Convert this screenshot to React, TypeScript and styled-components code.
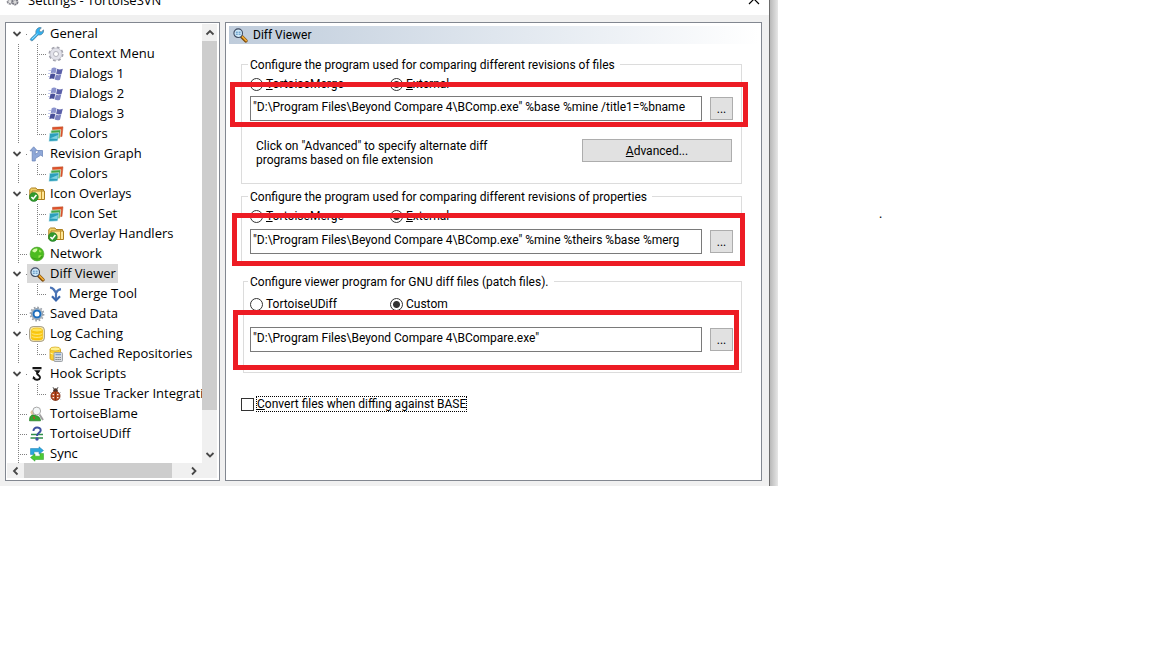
import React from "react";
import styled, { createGlobalStyle, css } from "styled-components";

const TREE_FONT = '"Open Sans", "Noto Sans", sans-serif';
const FORM_FONT = 'Roboto, "Noto Sans", sans-serif';

const GlobalStyle = createGlobalStyle`
  *, *::before, *::after { box-sizing: border-box; }
  body { margin: 0; background: #fff; color: #000; font: 12px/16px ${TREE_FONT}; }
  button, input { font: inherit; color: inherit; }
`;

/* ---------- page and window ---------- */

const Page = styled.main`
  display: grid;
  grid-template-columns: minmax(0, 1fr) 374px;
  align-items: start;
`;

const Margin = styled.aside`
  padding: 206px 0 0 101px;
`;

const WindowFrame = styled.section`
  display: flex;
`;

const WindowBody = styled.div`
  flex: 1;
  min-width: 0;
  border-right: 1px solid #6d6d6d;
  background: #f0f0f0;
`;

const DropShadow = styled.div`
  width: 8px;
  background: linear-gradient(to right, #b9b9b9, #e6e6e6);
`;

const TitleBar = styled.header`
  display: flex;
  align-items: flex-end;
  gap: 6px;
  height: 15px;
  padding: 0 9px 7px 6px;
  overflow: hidden;
  background: #fff;
`;

const WindowTitle = styled.h1`
  flex: 1;
  margin: 0;
  font-size: 13px;
  line-height: 16px;
  font-weight: 400;
`;

const CloseButton = styled.button`
  display: flex;
  padding: 0;
  border: 0;
  background: none;
`;

const Columns = styled.div`
  display: flex;
  gap: 5px;
  padding: 7px 7px 5px 5px;
`;

/* ---------- navigation tree ---------- */

const TreePanel = styled.nav`
  display: grid;
  grid-template-columns: minmax(0, 1fr) 15px;
  grid-template-rows: auto 15px;
  flex: 0 0 215px;
  padding: 1px 2px 2px 1px;
  border: 1px solid #828790;
  background: #fff;
`;

const TreeView = styled.div`
  overflow: hidden;
`;

const TreeList = styled.ul`
  margin: 0 0 -1px;
  padding: 0 0 0 2px;
  list-style: none;
`;

const TreeRow = styled.li`
  display: flex;
  height: 20px;
`;

const dotsDown = "repeating-linear-gradient(to bottom, #808080 0 1px, transparent 1px 2px)";
const dotsAcross = "repeating-linear-gradient(to right, #808080 0 1px, transparent 1px 2px)";

const Guide = styled.span<{ $kind: "line" | "tee" | "corner"; $wide?: boolean }>`
  flex: 0 0 ${(p) => (p.$wide ? 19 : 18)}px;
  background-repeat: no-repeat;
  ${(p) =>
    p.$kind === "line" &&
    css`
      background-image: ${dotsDown};
      background-position: 9px 0;
      background-size: 1px 20px;
    `}
  ${(p) =>
    (p.$kind === "tee" || p.$kind === "corner") &&
    css`
      background-image: ${dotsDown}, ${dotsAcross};
      background-position: 9px 0, 9px 10px;
      background-size: 1px ${p.$kind === "tee" ? 20 : 11}px, 9px 1px;
    `}
`;

const Expander = styled.button`
  display: flex;
  flex: 0 0 18px;
  align-items: center;
  padding: 0 0 0 3px;
  border: 0;
  background: ${dotsAcross} 17px 10px / 1px 1px no-repeat;
`;

const Node = styled.button<{ $selected?: boolean }>`
  display: flex;
  align-items: center;
  gap: 5px;
  height: 19px;
  padding: 0 2px;
  border: 0;
  background: ${(p) => (p.$selected ? "#d9d9d9" : "none")};
  font-family: ${TREE_FONT};
  font-size: 13px;
  line-height: 18px;
  white-space: nowrap;
`;

const NodeLabel = styled.span`
  padding-bottom: 1px;
`;

const ScrollBar = styled.div<{ $vertical?: boolean }>`
  display: flex;
  flex-direction: ${(p) => (p.$vertical ? "column" : "row")};
  background: #f0f0f0;
`;

const ScrollArrow = styled.button`
  display: flex;
  flex: 0 0 17px;
  align-items: center;
  justify-content: center;
  padding: 0;
  border: 0;
  background: none;
`;

const Thumb = styled.span<{ $share: number }>`
  flex: ${(p) => p.$share} 1 0;
  background: #cdcdcd;
`;

const Track = styled.span<{ $share: number }>`
  flex: ${(p) => p.$share} 1 0;
`;

const Corner = styled.span`
  background: #f0f0f0;
`;

/* ---------- settings page ---------- */

const SettingsPanel = styled.section`
  flex: 1;
  min-width: 0;
  border: 1px solid #828790;
  background: #fff;
  font-family: ${FORM_FONT};
  font-size: 12px;
`;

const PanelHeader = styled.h2`
  display: flex;
  align-items: center;
  gap: 5px;
  height: 18px;
  margin: 3px 2px 12px 3px;
  padding-left: 3px;
  background: linear-gradient(to right, #bfccdb, #dfe6ee 50%, #fff);
  font-size: 12px;
  font-weight: 400;
`;

const Form = styled.form`
  padding: 0 19px 0 15px;
`;

const Group = styled.fieldset<{ $indent?: boolean; $gap: number; $bottom: number; $after: number }>`
  display: block;
  min-width: 0;
  margin: 0 0 ${(p) => p.$after}px ${(p) => (p.$indent ? 2 : 0)}px;
  padding: ${(p) => p.$gap}px 8px ${(p) => p.$bottom}px ${(p) => (p.$indent ? 6 : 8)}px;
  border: 1px solid #dcdcdc;
`;

const Legend = styled.legend`
  margin-left: -2px;
  padding: 2px 5px 0 2px;
  line-height: 14px;
`;

const Choices = styled.div<{ $gap: number }>`
  display: grid;
  grid-template-columns: 140px auto;
  margin-bottom: ${(p) => p.$gap}px;
`;

const Choice = styled.label`
  display: flex;
  align-items: center;
  gap: 3px;
  height: 16px;
`;

const Radio = styled.input`
  appearance: none;
  width: 13px;
  height: 13px;
  margin: 0;
  border: 1px solid #333;
  border-radius: 50%;
  background: #fff;
  &:checked {
    background: radial-gradient(circle, #333 0 3px, #fff 4px);
  }
`;

const Entry = styled.div`
  position: relative;
  display: flex;
  align-items: center;
  gap: 8px;
`;

const PathInput = styled.input`
  flex: 1;
  min-width: 0;
  height: 25px;
  padding: 0 2px 4px;
  border: 1px solid #7a7a7a;
  background: #fff;
  outline: 0;
`;

const PushButton = styled.button<{ $width: number }>`
  flex: none;
  width: ${(p) => p.$width}px;
  height: 23px;
  padding: 0;
  border: 1px solid #adadad;
  background: #e1e1e1;
`;

const Highlight = styled.span<{ $inset: string }>`
  position: absolute;
  inset: ${(p) => p.$inset};
  border: 5px solid #ed1c24;
  pointer-events: none;
`;

const AdvancedRow = styled.div`
  display: flex;
  align-items: flex-start;
  justify-content: space-between;
  margin-top: 18px;
  padding: 0 1px 0 6px;
`;

const Hint = styled.p`
  width: 260px;
  margin: 0;
  line-height: 14px;
`;

const CheckLine = styled.label`
  display: inline-flex;
  align-items: center;
  gap: 2px;
`;

const CheckBox = styled.input`
  appearance: none;
  width: 13px;
  height: 13px;
  margin: 0;
  border: 1px solid #333;
  background: #fff;
`;

const FocusText = styled.span`
  border: 1px dotted #000;
  line-height: 14px;
`;

/* ---------- icons ---------- */

const Svg = styled.svg`
  display: block;
  flex: none;
`;

const Icon = ({ children }: { children: React.ReactNode }) => (
  <Svg width="16" height="16" viewBox="0 0 16 16" aria-hidden="true">
    {children}
  </Svg>
);

const WrenchIcon = () => (
  <Icon>
    <path d="M1.500 12.800 7 7.500C6.300 4.600 8 1.700 11 1.500l1.300.3-2 2.300.4 1.500 1.600.3 2.200-2c.5 3.200-2 5.600-5.300 5L3.800 14.500c-1.400.8-3.100-.4-2.300-1.700z" fill="#2eb2f2" stroke="#55839f" strokeWidth=".8" />
    <path d="M3 13 8.500 7.800" stroke="#9de0ff" strokeWidth="1" />
  </Icon>
);

const GearIcon = () => (
  <Icon>
    <circle cx="8" cy="8" r="6.500" fill="none" stroke="#a2a2ac" strokeWidth="2" strokeDasharray="2.700 2.405" />
    <circle cx="8" cy="8" r="4.300" fill="none" stroke="#e2e2ea" strokeWidth="3.600" />
    <circle cx="8" cy="8" r="6" fill="none" stroke="#b4b4be" strokeWidth=".6" />
    <circle cx="8" cy="8" r="2.500" fill="#fff" stroke="#a0a0ab" strokeWidth=".8" />
  </Icon>
);

const FlagIcon = () => (
  <Icon>
    <path d="M3.700 2.200C5.500 1.100 7.200 1.400 8.600 2.400L7.500 7.400C6 6.600 4.300 6.600 2.600 7.400z" fill="#8b93cd" />
    <path d="M9.200 2.800C10.900 3.800 12.800 3.700 14.800 2.700L13.500 7.900C11.600 8.900 9.800 8.700 8.100 7.800z" fill="#5b60a8" />
    <path d="M2.500 8C4.200 7.200 5.900 7.300 7.300 8.100L6.200 13C4.700 12.200 3 12.200 1.300 13z" fill="#4a5099" />
    <path d="M7.900 8.500C9.600 9.400 11.400 9.400 13.300 8.500L12 13.700C10.200 14.600 8.400 14.400 6.700 13.500z" fill="#7d84c2" />
    <path d="M.5 4.500h2.500M0 10.500h1.800M0 7.500h2.300" stroke="#c3c8ea" strokeWidth="1" />
  </Icon>
);

const ColorsIcon = () => (
  <Icon>
    <path d="M4.500 1.300 15 .8 14 10.500 4.500 11z" fill="#e0522a" stroke="#b9532f" strokeWidth=".5" />
    <path d="M3 4.300 12.800 3.700 11.800 12.600 2.500 13z" fill="#43a648" stroke="#e8f6e8" strokeWidth=".7" />
    <path d="M1.600 7.300 11 6.700 9.700 15 .9 15.500z" fill="#2b9fbb" stroke="#dff4f9" strokeWidth=".6" />
    <path d="M1.800 12.500 9.900 9l-.6 4z" fill="#7fd2e0" />
  </Icon>
);

const GraphIcon = () => (
  <Icon>
    <path d="M4.700.8 8.300 4.800H6.300v3.400L9.500 6.200 8.500 4.500h5v6l-1.600-1.500L6.300 12.600V15H3.200V4.800H1z" fill="#8fa8d8" stroke="#647fb6" strokeWidth=".7" />
  </Icon>
);

const FolderCheckIcon = () => (
  <Icon>
    <path d="M.8 3.500 2.500 2h4.500l1 1.500h6.500v9.500H.8z" fill="#f3d26a" stroke="#ac7f1e" strokeWidth="1" />
    <path d="M3 5h12.500v8.500H3z" fill="#ffe696" stroke="#ac7f1e" strokeWidth="1" />
    <path d="M12.500 4v9" stroke="#c49428" />
    <circle cx="4.800" cy="11" r="4.500" fill="#31992c" stroke="#1d7420" strokeWidth=".5" />
    <path d="M2.400 11 4.200 12.900 7.400 8.900" fill="none" stroke="#fff" strokeWidth="1.600" />
  </Icon>
);

const GlobeIcon = () => (
  <Icon>
    <circle cx="8" cy="8" r="6.900" fill="#4cbc20" stroke="#4a9a30" strokeWidth=".6" />
    <path d="M3 5C4.500 2.500 7 2 8.500 2.700l-.5 2L6 6.500 4.500 6z" fill="#d5f9aa" />
    <path d="M10 3.500 12.500 5l-.500 1.500-2-.500zM9.500 9.500l3-.500-1 2.500-2 .5z" fill="#9be455" />
    <path d="M2 10.500C4.500 14.500 11.500 14.500 14 10.500L12 10l-2.500 3L5 12z" fill="#2b8a12" opacity=".6" />
  </Icon>
);

const MagnifierIcon = () => (
  <Icon>
    <path d="m9.800 9.800 4 4" stroke="#7c4a0a" strokeWidth="3.600" strokeLinecap="round" />
    <path d="m10.200 9.600 4 4" stroke="#f0ab35" strokeWidth="1.700" strokeLinecap="round" />
    <circle cx="6.200" cy="6.200" r="4.300" fill="#cfe9f9" stroke="#3e4a60" strokeWidth="1.100" />
    <path d="M3.800 5.200h2M6.600 5.200h2M3.800 7.200h2M6.600 7.200h2" stroke="#4c87bb" strokeWidth="1" />
  </Icon>
);

const MergeIcon = () => (
  <Icon>
    <path d="M2 1.500c3 .3 4 2 6 5.500 1-2.500 2.500-3.500 5-3.800M8 6v8" fill="none" stroke="#4a74b6" strokeWidth="2.200" />
    <path d="M4 10.300 8 14.400 12 10.300" fill="none" stroke="#3865ac" strokeWidth="2.200" />
  </Icon>
);

const BlueGearIcon = () => (
  <Icon>
    <circle cx="8" cy="8" r="6.600" fill="none" stroke="#9aa0a8" strokeWidth="1.600" strokeDasharray="1.700 1.756" />
    <circle cx="8" cy="8" r="5.500" fill="#c0cdd9" stroke="#7b8793" strokeWidth=".8" />
    <circle cx="8" cy="8" r="3.500" fill="#fff" stroke="#1c6dbb" strokeWidth="2" />
  </Icon>
);

const CacheIcon = () => (
  <Icon>
    <rect x=".6" y=".6" width="14.800" height="14.800" rx="3.500" fill="#faecae" stroke="#a39a86" />
    <path d="M2.500 4v8.500c0 2 11 2 11 0V4" fill="#fbc80e" stroke="#eeb500" strokeWidth=".6" />
    <ellipse cx="8" cy="4" rx="5.500" ry="1.900" fill="#ffe45c" stroke="#eeb500" strokeWidth=".6" />
    <path d="M2.700 7.200c1.500 1.600 9 1.600 10.600 0M2.700 10.200c1.500 1.600 9 1.600 10.600 0" fill="none" stroke="#fff0a0" strokeWidth=".8" />
  </Icon>
);

const CacheReposIcon = () => (
  <Icon>
    <path d="M2 3v9.500c0 2.500 10.500 2.500 10.500 0V3" fill="#fcd030" stroke="#c99710" strokeWidth=".8" />
    <ellipse cx="7.200" cy="3" rx="5.200" ry="2" fill="#fff08c" stroke="#d9ac20" strokeWidth=".8" />
    <path d="M2.300 7c1.500 1.500 8 1.500 10 0" fill="none" stroke="#fff3a8" />
    <rect x="6" y="6.500" width="8.500" height="9" rx="1" fill="#d9dde2" stroke="#8c9096" strokeWidth=".8" />
    <path d="M7.500 8.500H13" stroke="#7ba0ca" strokeWidth="1.500" />
    <path d="M7.500 11.500H13M7.500 13.500H13" stroke="#666c74" strokeDasharray="1.200 .8" />
  </Icon>
);

const HookIcon = () => (
  <Icon>
    <path d="M3.500 1h9v2.200h-9zM5 4.200h6.500L9.800 7H8z" fill="#151515" />
    <path d="M8.500 6.500C6.500 8.500 11.500 9 11 11.700c-.5 2.400-4.500 2.800-6.300.5" fill="none" stroke="#151515" strokeWidth="1.900" />
    <path d="m3.500 13.300.7-3.300 2.500 2z" fill="#151515" />
  </Icon>
);

const BugIcon = () => (
  <Icon>
    <path d="M6 3 5 1.200M9 3l1-1.800" stroke="#444" strokeWidth=".9" />
    <path d="M3.300 7 2.300 6M11.700 7l1-1M3.300 12.500l-1 1M11.700 12.500l1 1" stroke="#999" strokeWidth=".8" />
    <circle cx="7.500" cy="4.600" r="2.300" fill="#4a352b" />
    <ellipse cx="7.500" cy="9.900" rx="4.600" ry="4.600" fill="#b8481c" stroke="#6b260e" strokeWidth=".7" />
    <path d="M7.500 6v8.500" stroke="#5d2310" strokeWidth=".6" />
    <path d="M4.600 8.700h1.500M9 8.700h1.500M4.600 11.700h1.500M9 11.700h1.500" stroke="#fff1e6" strokeWidth="1.300" />
  </Icon>
);

const BlameIcon = () => (
  <Icon>
    <circle cx="3.800" cy="6.500" r="2.300" fill="#e5c59d" />
    <path d="M.5 14.800c0-4.300 1.500-5.800 3.500-5.800 3 0 7.500 1.500 7.500 5.800z" fill="#33a52e" stroke="#1f7a22" strokeWidth=".7" />
    <path d="M4.500 10.500 5.500 13" stroke="#d83a2a" strokeWidth="1.200" />
    <path d="m10.500 8.500 3.500 5.500" stroke="#a0a0a0" strokeWidth="2" />
    <circle cx="7.700" cy="5" r="3.900" fill="#f4f7f8" stroke="#a9a9a9" strokeWidth="1" />
  </Icon>
);

const UDiffIcon = () => (
  <Icon>
    <path d="M2 8.500h12M1.500 12h12.500" stroke="#2f8f4a" strokeWidth="1.500" />
    <path d="M4.500 5c-.3-4.500 7.200-4.500 7.200-.8C11.700 6.700 8 7 8 10" fill="none" stroke="#3d50a0" strokeWidth="2" />
    <circle cx="8" cy="13" r="1.700" fill="#3d50a0" />
  </Icon>
);

const SyncIcon = () => (
  <Icon>
    <path d="M1.500 8.500V2.500h8.500V.8l4.500 3.700-4.500 3.700V5.800H5v2.700z" fill="#2ba6dc" stroke="#1b7db4" strokeWidth=".5" />
    <path d="M14.500 7.500v6H6v1.700L1.500 11.500 6 7.800v2.400h5V7.500z" fill="#4cca36" stroke="#2b9a28" strokeWidth=".5" />
  </Icon>
);

const AppIcon = () => (
  <Icon>
    <circle cx="4" cy="9.500" r="2.400" fill="#e4e4e4" stroke="#8c8c94" strokeWidth="1.800" strokeDasharray="2 .6" />
    <circle cx="9" cy="10" r="2.600" fill="#d8d8d8" stroke="#7a7a84" strokeWidth="1.800" strokeDasharray="2 .6" />
  </Icon>
);

type Direction = "up" | "down" | "left" | "right";
const CHEVRONS: Record<Direction, string> = {
  up: "M1.500 6.500 5 3l3.500 3.500",
  down: "M1.500 3 5 6.500l3.500-3.500",
  left: "M6.500 1.500 3 5l3.500 3.500",
  right: "M3 1.500 6.500 5 3 8.500",
};

const Chevron = ({ to }: { to: Direction }) => (
  <Svg width="10" height="10" viewBox="0 0 10 10" aria-hidden="true">
    <path d={CHEVRONS[to]} fill="none" stroke="#484848" strokeWidth="1.800" />
  </Svg>
);

/* ---------- data ---------- */

type Item = {
  label: string;
  icon: React.ComponentType;
  selected?: boolean;
  children?: Item[];
};

const ITEMS: Item[] = [
  {
    label: "General",
    icon: WrenchIcon,
    children: [
      { label: "Context Menu", icon: GearIcon },
      { label: "Dialogs 1", icon: FlagIcon },
      { label: "Dialogs 2", icon: FlagIcon },
      { label: "Dialogs 3", icon: FlagIcon },
      { label: "Colors", icon: ColorsIcon },
    ],
  },
  { label: "Revision Graph", icon: GraphIcon, children: [{ label: "Colors", icon: ColorsIcon }] },
  {
    label: "Icon Overlays",
    icon: FolderCheckIcon,
    children: [
      { label: "Icon Set", icon: ColorsIcon },
      { label: "Overlay Handlers", icon: FolderCheckIcon },
    ],
  },
  { label: "Network", icon: GlobeIcon },
  {
    label: "Diff Viewer",
    icon: MagnifierIcon,
    selected: true,
    children: [{ label: "Merge Tool", icon: MergeIcon }],
  },
  { label: "Saved Data", icon: BlueGearIcon },
  { label: "Log Caching", icon: CacheIcon, children: [{ label: "Cached Repositories", icon: CacheReposIcon }] },
  { label: "Hook Scripts", icon: HookIcon, children: [{ label: "Issue Tracker Integration", icon: BugIcon }] },
  { label: "TortoiseBlame", icon: BlameIcon },
  { label: "TortoiseUDiff", icon: UDiffIcon },
  { label: "Sync", icon: SyncIcon },
];

const TreeNode = ({ item }: { item: Item }) => (
  <Node type="button" $selected={item.selected}>
    <item.icon />
    <NodeLabel>{item.label}</NodeLabel>
  </Node>
);

const Tree = () => (
  <TreePanel aria-label="Settings pages">
    <TreeView>
      <TreeList>
        {ITEMS.map((item) => (
          <React.Fragment key={item.label}>
            <TreeRow>
              {item.children ? (
                <Expander type="button" aria-label={`Collapse ${item.label}`}>
                  <Chevron to="down" />
                </Expander>
              ) : (
                <Guide $kind="tee" />
              )}
              <TreeNode item={item} />
            </TreeRow>
            {item.children?.map((child, i, all) => (
              <TreeRow key={child.label}>
                <Guide $kind="line" $wide />
                <Guide $kind={i === all.length - 1 ? "corner" : "tee"} />
                <TreeNode item={child} />
              </TreeRow>
            ))}
          </React.Fragment>
        ))}
      </TreeList>
    </TreeView>
    <ScrollBar $vertical>
      <ScrollArrow type="button" aria-label="Scroll up"><Chevron to="up" /></ScrollArrow>
      <Thumb $share={369} />
      <Track $share={36} />
      <ScrollArrow type="button" aria-label="Scroll down"><Chevron to="down" /></ScrollArrow>
    </ScrollBar>
    <ScrollBar>
      <ScrollArrow type="button" aria-label="Scroll left"><Chevron to="left" /></ScrollArrow>
      <Thumb $share={148} />
      <Track $share={13} />
      <ScrollArrow type="button" aria-label="Scroll right"><Chevron to="right" /></ScrollArrow>
    </ScrollBar>
    <Corner />
  </TreePanel>
);

const EntryField = ({ label, value, inset }: { label: string; value: string; inset: string }) => (
  <Entry>
    <PathInput type="text" aria-label={label} defaultValue={value} />
    <PushButton type="button" $width={23} aria-label={`Browse for ${label}`}>...</PushButton>
    <Highlight $inset={inset} />
  </Entry>
);

const MergeChoices = ({ name, gap }: { name: string; gap: number }) => (
  <Choices $gap={gap}>
    <Choice>
      <Radio type="radio" name={name} />
      <span><u>T</u>ortoiseMerge</span>
    </Choice>
    <Choice>
      <Radio type="radio" name={name} defaultChecked />
      <span><u>E</u>xternal</span>
    </Choice>
  </Choices>
);

export default function App() {
  return (
    <>
      <GlobalStyle />
      <Page>
        <WindowFrame>
          <WindowBody>
            <TitleBar>
              <AppIcon />
              <WindowTitle>Settings - TortoiseSVN</WindowTitle>
              <CloseButton type="button" aria-label="Close">
                <Svg width="12" height="12" viewBox="0 0 12 12" aria-hidden="true">
                  <path d="m1-2 10 10M11-2 1 8" stroke="#000" strokeWidth="1.200" />
                </Svg>
              </CloseButton>
            </TitleBar>
            <Columns>
              <Tree />
              <SettingsPanel>
                <PanelHeader>
                  <MagnifierIcon />
                  Diff Viewer
                </PanelHeader>
                <Form>
                  <Group $gap={4} $bottom={16} $after={4}>
                    <Legend>Configure the program used for comparing different revisions of files</Legend>
                    <MergeChoices name="files" gap={4} />
                    <EntryField
                      label="file diff program"
                      value={'"D:\\Program Files\\Beyond Compare 4\\BComp.exe" %base %mine /title1=%bname'}
                      inset="-14px -15px -6px -20px"
                    />
                    <AdvancedRow>
                      <Hint>Click on "Advanced" to specify alternate diff programs based on file extension</Hint>
                      <PushButton type="button" $width={150}><u>A</u>dvanced...</PushButton>
                    </AdvancedRow>
                  </Group>
                  <Group $gap={4} $bottom={8} $after={10}>
                    <Legend>Configure the program used for comparing different revisions of properties</Legend>
                    <MergeChoices name="properties" gap={5} />
                    <EntryField
                      label="property diff program"
                      value={'"D:\\Program Files\\Beyond Compare 4\\BComp.exe" %mine %theirs %base %merg'}
                      inset="-16px -12px -12px -18px"
                    />
                  </Group>
                  <Group $indent $gap={7} $bottom={20} $after={23}>
                    <Legend>Configure viewer program for GNU diff files (patch files).</Legend>
                    <Choices $gap={15}>
                      <Choice>
                        <Radio type="radio" name="viewer" />
                        TortoiseUDiff
                      </Choice>
                      <Choice>
                        <Radio type="radio" name="viewer" defaultChecked />
                        Custom
                      </Choice>
                    </Choices>
                    <EntryField
                      label="patch viewer program"
                      value={'"D:\\Program Files\\Beyond Compare 4\\BCompare.exe"'}
                      inset="-17px -6px -18px -17px"
                    />
                  </Group>
                  <CheckLine>
                    <CheckBox type="checkbox" />
                    <FocusText><u>C</u>onvert files when diffing against BASE</FocusText>
                  </CheckLine>
                </Form>
              </SettingsPanel>
            </Columns>
          </WindowBody>
          <DropShadow />
        </WindowFrame>
        <Margin>.</Margin>
      </Page>
    </>
  );
}
